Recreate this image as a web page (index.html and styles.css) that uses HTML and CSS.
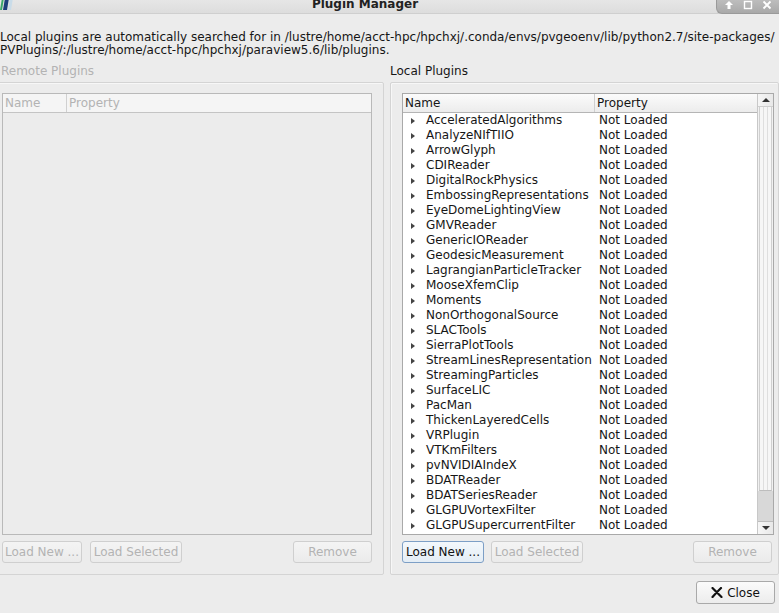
FILE: index.html
```html
<!DOCTYPE html>
<html>
<head>
<meta charset="utf-8">
<link rel="stylesheet" href="styles.css">
</head>
<body>
<div class="window">
  <div class="titlebar">
    <svg class="logo" width="14" height="12" viewBox="0 0 14 12">
      <polygon points="0,12 2,0 4,0 2,12" fill="#3aa86b"/>
      <polygon points="3,12 5,0 9,0 7,12" fill="#1c3f7a"/>
      <polygon points="8,12 10,0 13,0 11,12" fill="#c9dce9"/>
    </svg>
    <div class="title">Plugin Manager</div>
    <div class="wm-buttons">
      <svg width="10" height="10" viewBox="0 0 10 10"><path d="M5 1 L9 5 H6.5 V9 H3.5 V5 H1 Z" fill="#fff"/></svg>
      <svg width="10" height="10" viewBox="0 0 10 10"><rect x="1.5" y="1.5" width="7" height="7" fill="none" stroke="#fff" stroke-width="1.4"/></svg>
      <svg width="10" height="10" viewBox="0 0 10 10"><path d="M1.5 1.5 L8.5 8.5 M8.5 1.5 L1.5 8.5" stroke="#fff" stroke-width="1.8"/></svg>
    </div>
  </div>

  <div class="desc">Local plugins are automatically searched for in /lustre/home/acct-hpc/hpchxj/.conda/envs/pvgeoenv/lib/python2.7/site-packages/<br>PVPlugins/:/lustre/home/acct-hpc/hpchxj/paraview5.6/lib/plugins.</div>

  <div class="groups">
    <div class="group group-remote">
      <div class="group-label disabled">Remote Plugins</div>
      <div class="group-frame">
        <div class="tree">
          <div class="tree-main">
            <div class="tree-header disabled">
              <div class="hcell name-remote">Name</div>
              <div class="hcell prop">Property</div>
            </div>
            <div class="tree-body"></div>
          </div>
        </div>
        <div class="buttons">
          <div class="btn disabled w80">Load New ...</div>
          <div class="btn disabled w92">Load Selected</div>
          <div class="spacer"></div>
          <div class="btn disabled w79">Remove</div>
        </div>
      </div>
    </div>

    <div class="group group-local">
      <div class="group-label">Local Plugins</div>
      <div class="group-frame">
        <div class="tree">
          <div class="tree-main">
            <div class="tree-header">
              <div class="hcell name-local">Name</div>
              <div class="hcell prop">Property</div>
            </div>
            <div class="tree-body" id="rows">
              <div class="row"><span class="arrow"></span><span class="cname">AcceleratedAlgorithms</span><span class="cprop">Not Loaded</span></div>
              <div class="row"><span class="arrow"></span><span class="cname">AnalyzeNIfTIIO</span><span class="cprop">Not Loaded</span></div>
              <div class="row"><span class="arrow"></span><span class="cname">ArrowGlyph</span><span class="cprop">Not Loaded</span></div>
              <div class="row"><span class="arrow"></span><span class="cname">CDIReader</span><span class="cprop">Not Loaded</span></div>
              <div class="row"><span class="arrow"></span><span class="cname">DigitalRockPhysics</span><span class="cprop">Not Loaded</span></div>
              <div class="row"><span class="arrow"></span><span class="cname">EmbossingRepresentations</span><span class="cprop">Not Loaded</span></div>
              <div class="row"><span class="arrow"></span><span class="cname">EyeDomeLightingView</span><span class="cprop">Not Loaded</span></div>
              <div class="row"><span class="arrow"></span><span class="cname">GMVReader</span><span class="cprop">Not Loaded</span></div>
              <div class="row"><span class="arrow"></span><span class="cname">GenericIOReader</span><span class="cprop">Not Loaded</span></div>
              <div class="row"><span class="arrow"></span><span class="cname">GeodesicMeasurement</span><span class="cprop">Not Loaded</span></div>
              <div class="row"><span class="arrow"></span><span class="cname">LagrangianParticleTracker</span><span class="cprop">Not Loaded</span></div>
              <div class="row"><span class="arrow"></span><span class="cname">MooseXfemClip</span><span class="cprop">Not Loaded</span></div>
              <div class="row"><span class="arrow"></span><span class="cname">Moments</span><span class="cprop">Not Loaded</span></div>
              <div class="row"><span class="arrow"></span><span class="cname">NonOrthogonalSource</span><span class="cprop">Not Loaded</span></div>
              <div class="row"><span class="arrow"></span><span class="cname">SLACTools</span><span class="cprop">Not Loaded</span></div>
              <div class="row"><span class="arrow"></span><span class="cname">SierraPlotTools</span><span class="cprop">Not Loaded</span></div>
              <div class="row"><span class="arrow"></span><span class="cname">StreamLinesRepresentation</span><span class="cprop">Not Loaded</span></div>
              <div class="row"><span class="arrow"></span><span class="cname">StreamingParticles</span><span class="cprop">Not Loaded</span></div>
              <div class="row"><span class="arrow"></span><span class="cname">SurfaceLIC</span><span class="cprop">Not Loaded</span></div>
              <div class="row"><span class="arrow"></span><span class="cname">PacMan</span><span class="cprop">Not Loaded</span></div>
              <div class="row"><span class="arrow"></span><span class="cname">ThickenLayeredCells</span><span class="cprop">Not Loaded</span></div>
              <div class="row"><span class="arrow"></span><span class="cname">VRPlugin</span><span class="cprop">Not Loaded</span></div>
              <div class="row"><span class="arrow"></span><span class="cname">VTKmFilters</span><span class="cprop">Not Loaded</span></div>
              <div class="row"><span class="arrow"></span><span class="cname">pvNVIDIAIndeX</span><span class="cprop">Not Loaded</span></div>
              <div class="row"><span class="arrow"></span><span class="cname">BDATReader</span><span class="cprop">Not Loaded</span></div>
              <div class="row"><span class="arrow"></span><span class="cname">BDATSeriesReader</span><span class="cprop">Not Loaded</span></div>
              <div class="row"><span class="arrow"></span><span class="cname">GLGPUVortexFilter</span><span class="cprop">Not Loaded</span></div>
              <div class="row"><span class="arrow"></span><span class="cname">GLGPUSupercurrentFilter</span><span class="cprop">Not Loaded</span></div>
            </div>
          </div>
          <div class="vscroll">
            <div class="sb-btn"><span class="up"></span></div>
            <div class="sb-thumb"></div>
            <div class="sb-track"></div>
            <div class="sb-btn"><span class="down"></span></div>
          </div>
        </div>
        <div class="buttons">
          <div class="btn focus w82">Load New ...</div>
          <div class="btn disabled w92">Load Selected</div>
          <div class="spacer"></div>
          <div class="btn disabled w79">Remove</div>
        </div>
      </div>
    </div>
  </div>

  <div class="footer">
    <div class="btn close-btn">
      <svg width="12" height="11" viewBox="0 0 12 11"><path d="M1.5 1 Q5 4.5 10.5 10 M10 1 Q6 5 1.5 10" stroke="#111" stroke-width="2.2" fill="none" stroke-linecap="round"/></svg>
      <span>Close</span>
    </div>
  </div>
</div>
</body>
</html>
```

FILE: styles.css
```css
* { box-sizing: border-box; }
html, body { margin: 0; padding: 0; }
body {
  width: 779px;
  height: 613px;
  overflow: hidden;
  background: #ececec;
  font-family: "DejaVu Sans", sans-serif;
  font-size: 12px;
  color: #161616;
}
.window {
  width: 779px;
  height: 613px;
  display: flex;
  flex-direction: column;
}
.titlebar {
  height: 14px;
  display: flex;
  align-items: flex-start;
  background: linear-gradient(#e6e6e6, #dddddd);
  border-bottom: 1px solid #cfcfcf;
}
.logo { display: block; margin-top: -2px; }
.title {
  flex: 1;
  text-align: center;
  font-weight: bold;
  font-size: 12px;
  line-height: 12px;
  margin-top: -2px;
  color: #222;
}
.wm-buttons {
  width: 63px;
  height: 14px;
  background: linear-gradient(#bdbdbd, #a9a9a9);
  border-bottom-left-radius: 6px;
  border-left: 1px solid #9a9a9a;
  border-bottom: 1px solid #9a9a9a;
  display: flex;
  align-items: center;
  justify-content: space-around;
  padding: 0 3px;
}
.wm-buttons svg { display: block; margin-top: -3px; }
.desc {
  margin-top: 17px;
  line-height: 13px;
  white-space: nowrap;
}
.groups {
  display: flex;
  margin-top: 8px;
}
.group { display: flex; flex-direction: column; }
.group-remote { width: 384px; }
.group-local { margin-left: 6px; width: 389px; }
.group-label {
  line-height: 13px;
  height: 13px;
  margin-bottom: 4px;
  padding-left: 1px;
}
.group-local .group-label { padding-left: 0; }
.disabled { color: #b3b3b3; }
.group-frame {
  height: 493px;
  border: 1px solid #d4d4d4;
  border-radius: 2px;
  box-shadow: inset 1px 1px 0 #f7f7f7;
  padding: 10px 11px 10px 11px;
  display: flex;
  flex-direction: column;
}
.group-remote .group-frame { margin-left: -10px; width: 394px; }
.group-local .group-frame { padding-right: 4px; }
.tree {
  height: 442px;
  border: 1px solid #a9a9a9;
  background: #fff;
  display: flex;
}
.group-remote .tree { border-color: #b9b9b9; background: #ececec; }
.tree-main { flex: 1; display: flex; flex-direction: column; min-width: 0; }
.tree-header {
  height: 19px;
  display: flex;
  background: linear-gradient(#fbfbfb, #ececec);
  border-bottom: 1px solid #b5b5b5;
}
.group-remote .tree-header { background: #f5f5f5; border-bottom-color: #c4c4c4; }
.hcell {
  line-height: 18px;
  padding-left: 2px;
  white-space: nowrap;
}
.name-remote { width: 64px; border-right: 1px solid #d0d0d0; }
.name-local { width: 192px; border-right: 1px solid #cfcfcf; }
.prop { flex: 1; }
.tree-body { flex: 1; overflow: hidden; }
.row {
  height: 15px;
  line-height: 15px;
  display: flex;
  align-items: center;
  white-space: nowrap;
}
.arrow {
  width: 0; height: 0;
  border-left: 4px solid #444;
  border-top: 3px solid transparent;
  border-bottom: 3px solid transparent;
  margin-left: 8px;
  margin-right: 11px;
}
.cname { width: 169px; }
.cprop { padding-left: 4px; }
.vscroll {
  width: 16px;
  display: flex;
  flex-direction: column;
  border-left: 1px solid #c8c8c8;
  background: #f1f1f1;
}
.sb-btn {
  height: 13px;
  display: flex;
  align-items: center;
  justify-content: center;
  background: linear-gradient(90deg, #f6f6f6, #e8e8e8);
  border-bottom: 1px solid #cfcfcf;
}
.sb-btn:last-child { border-bottom: none; border-top: 1px solid #bdbdbd; }
.up { width: 0; height: 0; border-left: 4px solid transparent; border-right: 4px solid transparent; border-bottom: 4px solid #333; }
.down { width: 0; height: 0; border-left: 4px solid transparent; border-right: 4px solid transparent; border-top: 4px solid #333; }
.sb-thumb {
  flex: 1;
  background: repeating-linear-gradient(90deg, #f6f6f6 0 3px, #dedede 3px 4px);
  border-bottom: 1px solid #bdbdbd;
  margin: 0 1px;
  border-left: 1px solid #d0d0d0;
  border-right: 1px solid #d0d0d0;
}
.sb-track { height: 30px; background: #d8d8d8; }
.buttons {
  display: flex;
  margin-top: 6px;
  gap: 8px;
}
.group-local .buttons { gap: 7px; padding-right: 2px; }
.spacer { flex: 1; }
.btn {
  height: 22px;
  border: 1px solid #b8b8b8;
  border-radius: 3px;
  background: linear-gradient(#f7f7f7, #e6e6e6);
  display: flex;
  align-items: center;
  justify-content: center;
  white-space: nowrap;
  line-height: 20px;
}
.btn.disabled { border-color: #cfcfcf; background: linear-gradient(#f4f4f4, #ebebeb); }
.btn.focus { border-color: #7d9fc6; background: linear-gradient(#f3f8fc, #e4edf5); color: #111; }
.w80 { width: 80px; }
.w82 { width: 82px; }
.w92 { width: 92px; }
.w79 { width: 79px; }
.footer {
  display: flex;
  justify-content: flex-end;
  margin-top: 6px;
  padding-right: 4px;
}
.close-btn {
  width: 79px;
  height: 23px;
  border-color: #a9a9a9;
  background: linear-gradient(#fbfbfb, #ececec);
  gap: 4px;
  color: #111;
}
.close-btn svg { display: block; }
```
